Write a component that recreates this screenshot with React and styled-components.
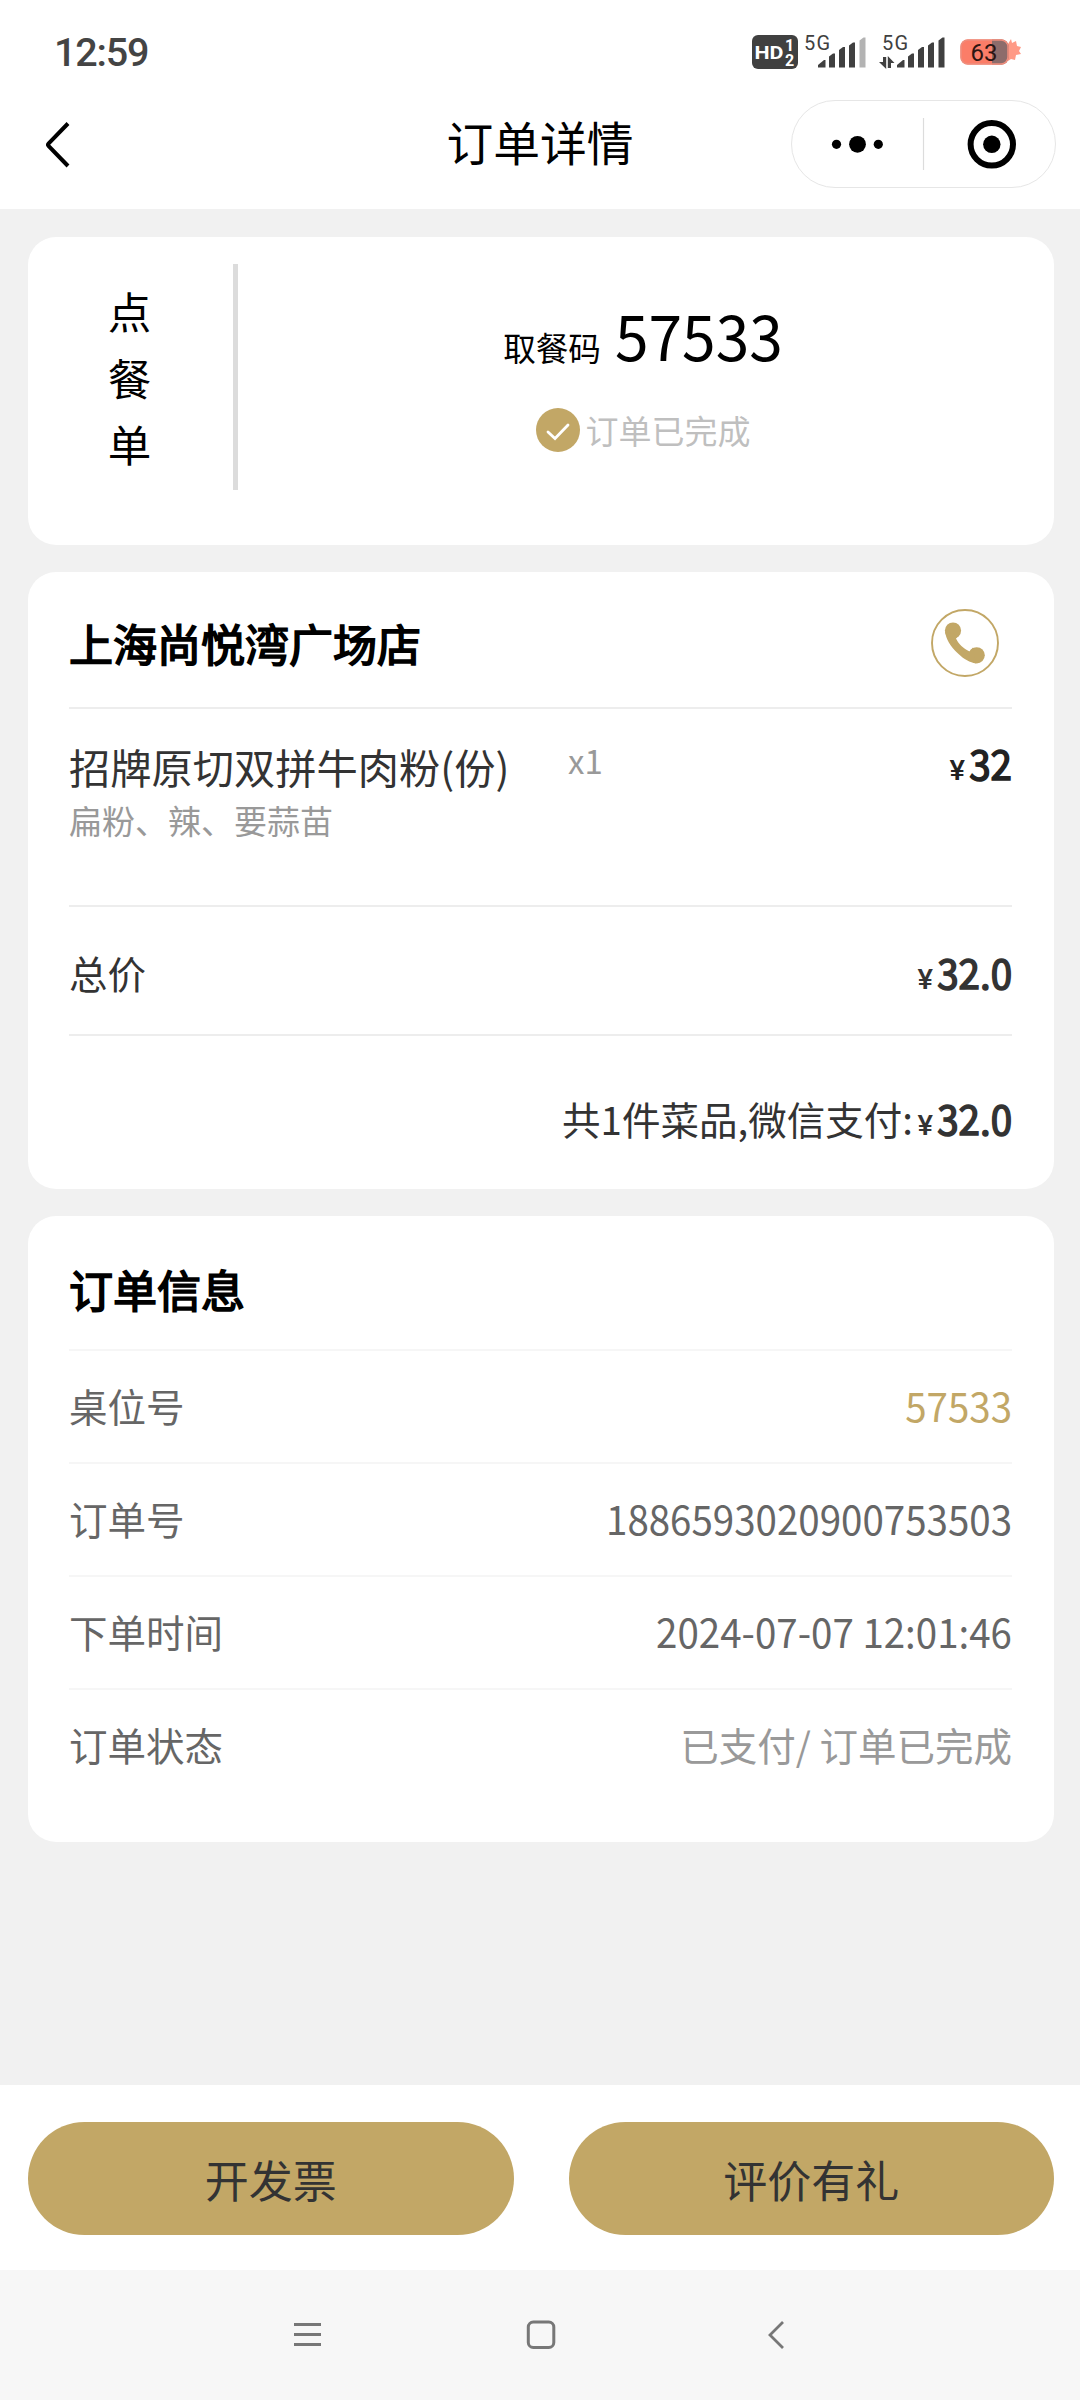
import React from "react";
import styled, { createGlobalStyle } from "styled-components";

const gold = "#c2a766";

const GlobalStyle = createGlobalStyle`
  * {
    box-sizing: border-box;
  }
  body {
    margin: 0;
    background: #f1f1f1;
    font-family: "Noto Sans CJK SC", sans-serif;
  }
`;

const Screen = styled.div`
  display: flex;
  flex-direction: column;
  width: 1080px;
  height: 2400px;
  overflow: hidden;
  background: #f1f1f1;
`;

const StatusBar = styled.div`
  display: flex;
  justify-content: space-between;
  height: 100px;
  padding: 0 58px 0 54px;
  background: #fff;
`;

const Clock = styled.span`
  margin-top: 29px;
  font: 500 39.5px/48px Roboto, sans-serif;
  letter-spacing: -1.2px;
  color: #444;
`;

const StatusIcons = styled.div`
  display: flex;
  padding-top: 32px;
`;

const NavBar = styled.header`
  display: grid;
  grid-template-columns: 1fr auto 1fr;
  height: 109px;
  padding: 0 24px;
  background: #fff;
`;

const BackIcon = styled.svg`
  margin: 20px 0 0 20px;
`;

const Title = styled.h1`
  margin: 7px 0 0;
  font-size: 46.75px;
  font-weight: 400;
  line-height: 68px;
  color: #000;
`;

const Capsule = styled.div`
  display: flex;
  align-items: center;
  justify-self: end;
  width: 265px;
  height: 88px;
  border: 1px solid #e6e6e6;
  border-radius: 44px;
`;

const Content = styled.main`
  display: flex;
  flex: 1;
  flex-direction: column;
  gap: 27px;
  padding: 28px 26px 0 28px;
`;

const Card = styled.section`
  height: ${(props) => props.$height}px;
  padding: ${(props) => props.$padding || "0 42px 0 41px"};
  border-radius: 28px;
  background: #fff;
`;

const PickupCard = styled(Card)`
  display: flex;
`;

const Kind = styled.div`
  display: flex;
  flex-direction: column;
  align-items: center;
  width: 210px;
  height: 226px;
  padding: 14px 2px 0 0;
  border-right: 5px solid #dcdcdc;
  font-size: 43.5px;
  line-height: 66.5px;
  color: #000;
`;

const Pickup = styled.div`
  display: flex;
  flex: 1;
  flex-direction: column;
  align-items: center;
  padding: 27px 6px 0 0;
`;

// digits on this screen stand slightly taller than the font draws them
const Digits = styled.span`
  display: inline-block;
  transform: scaleY(1.045);
  transform-origin: 50% 80%;
`;

const Code = styled.div`
  display: flex;
  align-items: baseline;
  gap: 14px;
  font-size: 32.6px;
  line-height: 88px;
  color: #000;
`;

const CodeDigits = styled(Digits)`
  font-size: 60.5px;
`;

const Done = styled.div`
  display: flex;
  align-items: center;
  gap: 6px;
  margin-top: 15px;
  font-size: 33px;
  line-height: 48px;
  color: #bfbfbf;
`;

const Head = styled.div`
  display: flex;
  align-items: center;
  justify-content: space-between;
  height: ${(props) => props.$height}px;
  padding: ${(props) => props.$padding};
  border-bottom: 2px solid ${(props) => props.$line};
`;

const Heading = styled.h2`
  margin: 0;
  font-size: 44px;
  font-weight: 400;
  line-height: 60px;
  color: #000;
  -webkit-text-stroke: 1.7px #000;
`;

const Dish = styled.div`
  display: grid;
  grid-template-columns: 499px 1fr auto;
  height: 198px;
  padding-top: 29px;
  border-bottom: 2px solid #ededed;
`;

const DishName = styled.div`
  margin-top: -2px;
  font-size: 41.25px;
  line-height: 60px;
  color: #333;
`;

const Note = styled.div`
  font-size: 33px;
  line-height: 48px;
  color: #999;
`;

const Count = styled.span`
  font-size: 33px;
  line-height: 44px;
  color: #999;
`;

const Price = styled.span`
  font-size: 38.5px;
  line-height: 50px;
  color: ${(props) => props.$color || "#333"};

  small {
    display: inline-block;
    margin-right: 5px;
    font: 500 27px Roboto, sans-serif;
    transform: scaleX(1.08);
  }
`;

const Amount = styled(Digits)`
  -webkit-text-stroke: 1.5px currentColor;
`;

const Total = styled.div`
  display: flex;
  align-items: center;
  justify-content: ${(props) => (props.$end ? "flex-end" : "space-between")};
  height: ${(props) => props.$height}px;
  padding-top: ${(props) => props.$top}px;
  border-bottom: ${(props) => (props.$end ? "none" : "2px solid #ededed")};
  font-size: 38.5px;
  line-height: 56px;
  color: #333;
`;

const PayLabel = styled.span`
  margin-right: 5px;
`;

const InfoRow = styled.div`
  display: flex;
  align-items: center;
  justify-content: space-between;
  height: 113px;
  padding-bottom: 3px;
  border-bottom: 2px solid #f6f6f6;
  font-size: 38.5px;
  line-height: 56px;
  color: #666;

  &:last-child {
    border-color: transparent;
  }
`;

const Value = styled.span`
  color: ${(props) => props.$color || "#666"};
`;

const Footer = styled.footer`
  display: flex;
  gap: 55px;
  height: 185px;
  padding: 37px 26px 0 28px;
  background: #fff;
`;

const Button = styled.button`
  flex: 1;
  height: 113px;
  padding: 0;
  border: none;
  border-radius: 57px;
  background: ${gold};
  font-family: inherit;
  font-size: 44px;
  line-height: 64px;
  color: #333;
`;

const SystemNav = styled.nav`
  display: flex;
  align-items: center;
  justify-content: space-between;
  height: 130px;
  padding: 0 293px 0 291px;
  background: #f7f7f7;
`;

const HomeIcon = styled.svg`
  margin-right: 6px;
`;

const Signal = ({ x, last, arrows }) => (
  <svg width={arrows ? 75 : 67} height="40" viewBox={`${x} 32 ${arrows ? 75 : 67} 40`}>
    <text x={x + (arrows ? 4 : 1)} y="49.5" fontFamily="Roboto" fontSize="20" textLength="26" fill="#404040">
      5G
    </text>
    {arrows && (
      <g fill="#404040">
        <path d="M884 57h3.2v12l-7.2-7h4z" />
        <path d="M888.8 68h3.2v-5h3.5l-6.7-7z" />
      </g>
    )}
    <g transform={`translate(${arrows ? 898 : 819} 0)`} fill="#404040">
      <path d="M0 67.5v-2.500l6-5h1.500v7.500z" />
      <path d="M11 67.500v-11l4-3h2v14z" />
      <path d="M21 67.500v-17.500l4-3h2v20.500z" />
      <path d="M31 67.500v-22l4-3h2v25z" />
      <path d="M41.500 67.500v-27l4-3h2v30z" fill={last} />
    </g>
  </svg>
);

const Battery = () => (
  <svg width="64" height="40" viewBox="959 32 64 40">
    <path d="M1009 44l3-5 1 4 4-2 1 5 4 1-2 4 2 3-5 1-1 5-4-1-3 2z" fill="#ff9a86" />
    <rect x="961.5" y="39.5" width="48" height="25" rx="7" fill="#fb7d68" />
    <path d="M993 39.5h9.500a7 7 0 0 1 7 7v11a7 7 0 0 1-7 7H993z" fill="#8d6c6b" />
    <rect x="962" y="40" width="47" height="24" rx="7" fill="none" stroke="#ee8d7d" strokeWidth="1.5" />
    <text x="985" y="61" textAnchor="middle" fontFamily="Roboto" fontSize="24" fill="#2e1512">
      63
    </text>
  </svg>
);

const HdBadge = () => (
  <svg width="52" height="40" viewBox="752 32 52 40" fill="#fff" fontFamily="Roboto" fontWeight="700">
    <rect x="753" y="35" width="46" height="34" rx="6" fill="#404040" />
    <text x="755.5" y="59" fontSize="19" textLength="29" lengthAdjust="spacingAndGlyphs">
      HD
    </text>
    <text x="786" y="51" fontSize="16">
      1
    </text>
    <text x="786" y="65.5" fontSize="16">
      2
    </text>
  </svg>
);

const info = [
  { label: "桌位号", value: <Digits>57533</Digits>, color: gold },
  { label: "订单号", value: <Digits>1886593020900753503</Digits> },
  { label: "下单时间", value: <Digits>2024-07-07 12:01:46</Digits> },
  { label: "订单状态", value: "已支付/ 订单已完成", color: "#999" },
];

const App = () => {
  return (
    <Screen>
      <GlobalStyle />
      <StatusBar>
        <Clock>12:59</Clock>
        <StatusIcons>
          <HdBadge />
          <Signal x={804} last="#b3b3b3" />
          <svg width="8" height="40" />
          <Signal x={879} arrows />
          <svg width="5" height="40" />
          <Battery />
        </StatusIcons>
      </StatusBar>

      <NavBar>
        <BackIcon width="28" height="50" viewBox="44 120 28 50" fill="none" stroke="#000" strokeWidth="4">
          <path d="M68 123.5 48.5 143.5Q47.5 144.6 48.5 145.8L68 166" />
        </BackIcon>
        <Title>订单详情</Title>
        <Capsule>
          <svg width="263" height="86" viewBox="792 101 263 86">
            <circle cx="836.5" cy="144.3" r="4.6" />
            <circle cx="857.5" cy="144.3" r="8.4" />
            <circle cx="878.3" cy="144.3" r="4.6" />
            <path d="M923.5 118v52" stroke="#dcdcdc" strokeWidth="1.2" />
            <circle cx="991.8" cy="144.3" r="21.2" fill="none" stroke="#000" strokeWidth="6" />
            <circle cx="991.8" cy="144.3" r="8.7" />
          </svg>
        </Capsule>
      </NavBar>

      <Content>
        <PickupCard $height={308} $padding="27px 0 0">
          <Kind>
            <span>点</span>
            <span>餐</span>
            <span>单</span>
          </Kind>
          <Pickup>
            <Code>
              取餐码<CodeDigits>57533</CodeDigits>
            </Code>
            <Done>
              <svg width="44" height="44" viewBox="0 0 44 44" fill="none">
                <circle cx="22" cy="22" r="22" fill={gold} />
                <path d="M12 24l7 6.500L32 17" stroke="#fff" strokeWidth="2.800" strokeLinecap="round" />
              </svg>
              订单已完成
            </Done>
          </Pickup>
        </PickupCard>

        <Card $height={617}>
          <Head $height={137} $padding="7px 13px 0 0" $line="#ededed">
            <Heading>上海尚悦湾广场店</Heading>
            <svg width="68" height="68" viewBox="931 609.4 68 68">
              <circle cx="965" cy="643.4" r="33" fill="none" stroke={gold} strokeWidth="1.9" />
              <circle cx="953" cy="631" r="8.1" fill={gold} />
              <circle cx="976.7" cy="655.7" r="8.1" fill={gold} />
              <path
                d="M945 632c1 7 5 15 13 22 6 6 12 9 18 9.800l-3-16-3.500 4c-6-3-11-7.500-13.500-13l3-3z"
                fill={gold}
              />
            </svg>
          </Head>
          <Dish>
            <div>
              <DishName>招牌原切双拼牛肉粉(份)</DishName>
              <Note>扁粉、辣、要蒜苗</Note>
            </div>
            <Count>x1</Count>
            <Price $color="#222">
              <small>¥</small>
              <Amount>32</Amount>
            </Price>
          </Dish>
          <Total $height={129} $top={2}>
            <span>总价</span>
            <Price>
              <small>¥</small>
              <Amount>32.0</Amount>
            </Price>
          </Total>
          <Total $end $height={153} $top={10}>
            <PayLabel>共1件菜品,微信支付:</PayLabel>
            <Price>
              <small>¥</small>
              <Amount>32.0</Amount>
            </Price>
          </Total>
        </Card>

        <Card $height={626}>
          <Head $height={135} $padding="12px 0 0" $line="#f6f6f6">
            <Heading>订单信息</Heading>
          </Head>
          {info.map((row) => (
            <InfoRow key={row.label}>
              <span>{row.label}</span>
              <Value $color={row.color}>{row.value}</Value>
            </InfoRow>
          ))}
        </Card>
      </Content>

      <Footer>
        <Button>开发票</Button>
        <Button>评价有礼</Button>
      </Footer>

      <SystemNav>
        <svg width="32" height="32" viewBox="0 0 32 32" stroke="#777" strokeWidth="3">
          <path d="M3 5.500h27M3 15.500h27M3 25.500h27" />
        </svg>
        <HomeIcon width="32" height="32" viewBox="0 0 32 32" fill="none" stroke="#777" strokeWidth="3">
          <rect x="3.3" y="3" width="25.5" height="25.5" rx="5" />
        </HomeIcon>
        <svg width="22" height="32" viewBox="0 0 22 32" fill="none" stroke="#777" strokeWidth="2.8">
          <path d="M18 3 5 16l13 13" />
        </svg>
      </SystemNav>
    </Screen>
  );
};

export default App;
